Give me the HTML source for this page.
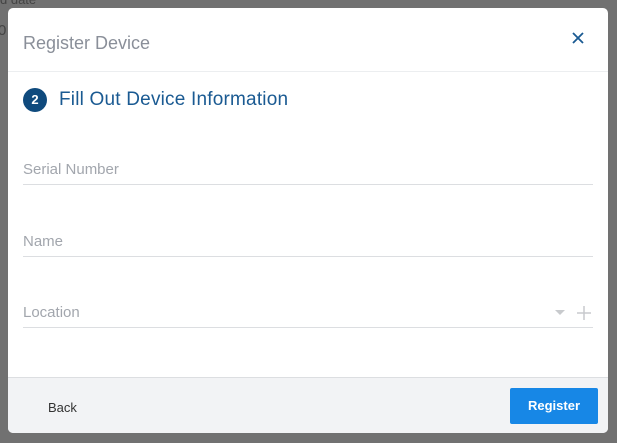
<!DOCTYPE html>
<html><head><style>
body{margin:0;width:617px;height:443px;background:#717171;font-family:"Liberation Sans",sans-serif;position:relative;overflow:hidden}
.bgt{position:absolute;color:#444;font-size:13px}
.m{position:absolute;left:8px;top:8px;width:600px;height:425px;background:#fff;border-radius:5px;overflow:hidden}
.h{height:63px;border-bottom:1px solid #eceef0;position:relative}
.h span{position:absolute;left:15px;top:25px;font-size:18px;color:#8a8f99}
.x{position:absolute;right:24px;top:24px}
.st{position:absolute;left:15px;top:80px;display:flex;align-items:center}
.c{width:24px;height:24px;border-radius:50%;background:#0f4a7d;color:#fff;font-weight:bold;font-size:13px;text-align:center;line-height:24px}
.st b{font-weight:normal;font-size:19px;color:#1a5a92;margin-left:12px;letter-spacing:0.2px}
.f{position:absolute;left:15px;width:570px;border-bottom:1px solid #dcdee1;color:#a2a6ad;font-size:15px;padding-bottom:6px}
.ft{position:absolute;left:0;top:369px;width:600px;height:56px;background:#f2f3f5;border-top:1px solid #dcdee1}
.back{position:absolute;left:40px;top:22px;font-size:13px;color:#333}
.reg{position:absolute;right:10px;top:10px;width:88px;height:36px;background:#1787e6;border-radius:2px;color:#fff;font-size:13px;text-align:center;line-height:36px;font-weight:bold}
</style></head><body>
<div class="bgt" style="left:0;top:-8px">d date</div>
<div class="bgt" style="left:-2px;top:22px;font-size:15px">0</div>
<div class="m">
<div class="h"><span>Register Device</span>
<svg class="x" width="12" height="12" viewBox="0 0 12 12"><path d="M1 1L11 11M11 1L1 11" stroke="#1a5a92" stroke-width="1.8"/></svg></div>
<div class="st"><div class="c">2</div><b>Fill Out Device Information</b></div>
<div class="f" style="top:153px">Serial Number</div>
<div class="f" style="top:225px">Name</div>
<div class="f" style="top:296px">Location
<svg style="position:absolute;right:28px;top:6px" width="10" height="6"><path d="M0 0H10L5 5Z" fill="#c8cacd"/></svg>
<svg style="position:absolute;right:2px;top:2px" width="14" height="14"><path d="M7 0V14M0 7H14" stroke="#c8cacd" stroke-width="1.5"/></svg></div>
<div class="ft"><span class="back">Back</span><div class="reg">Register</div></div>
</div>
</body></html>
